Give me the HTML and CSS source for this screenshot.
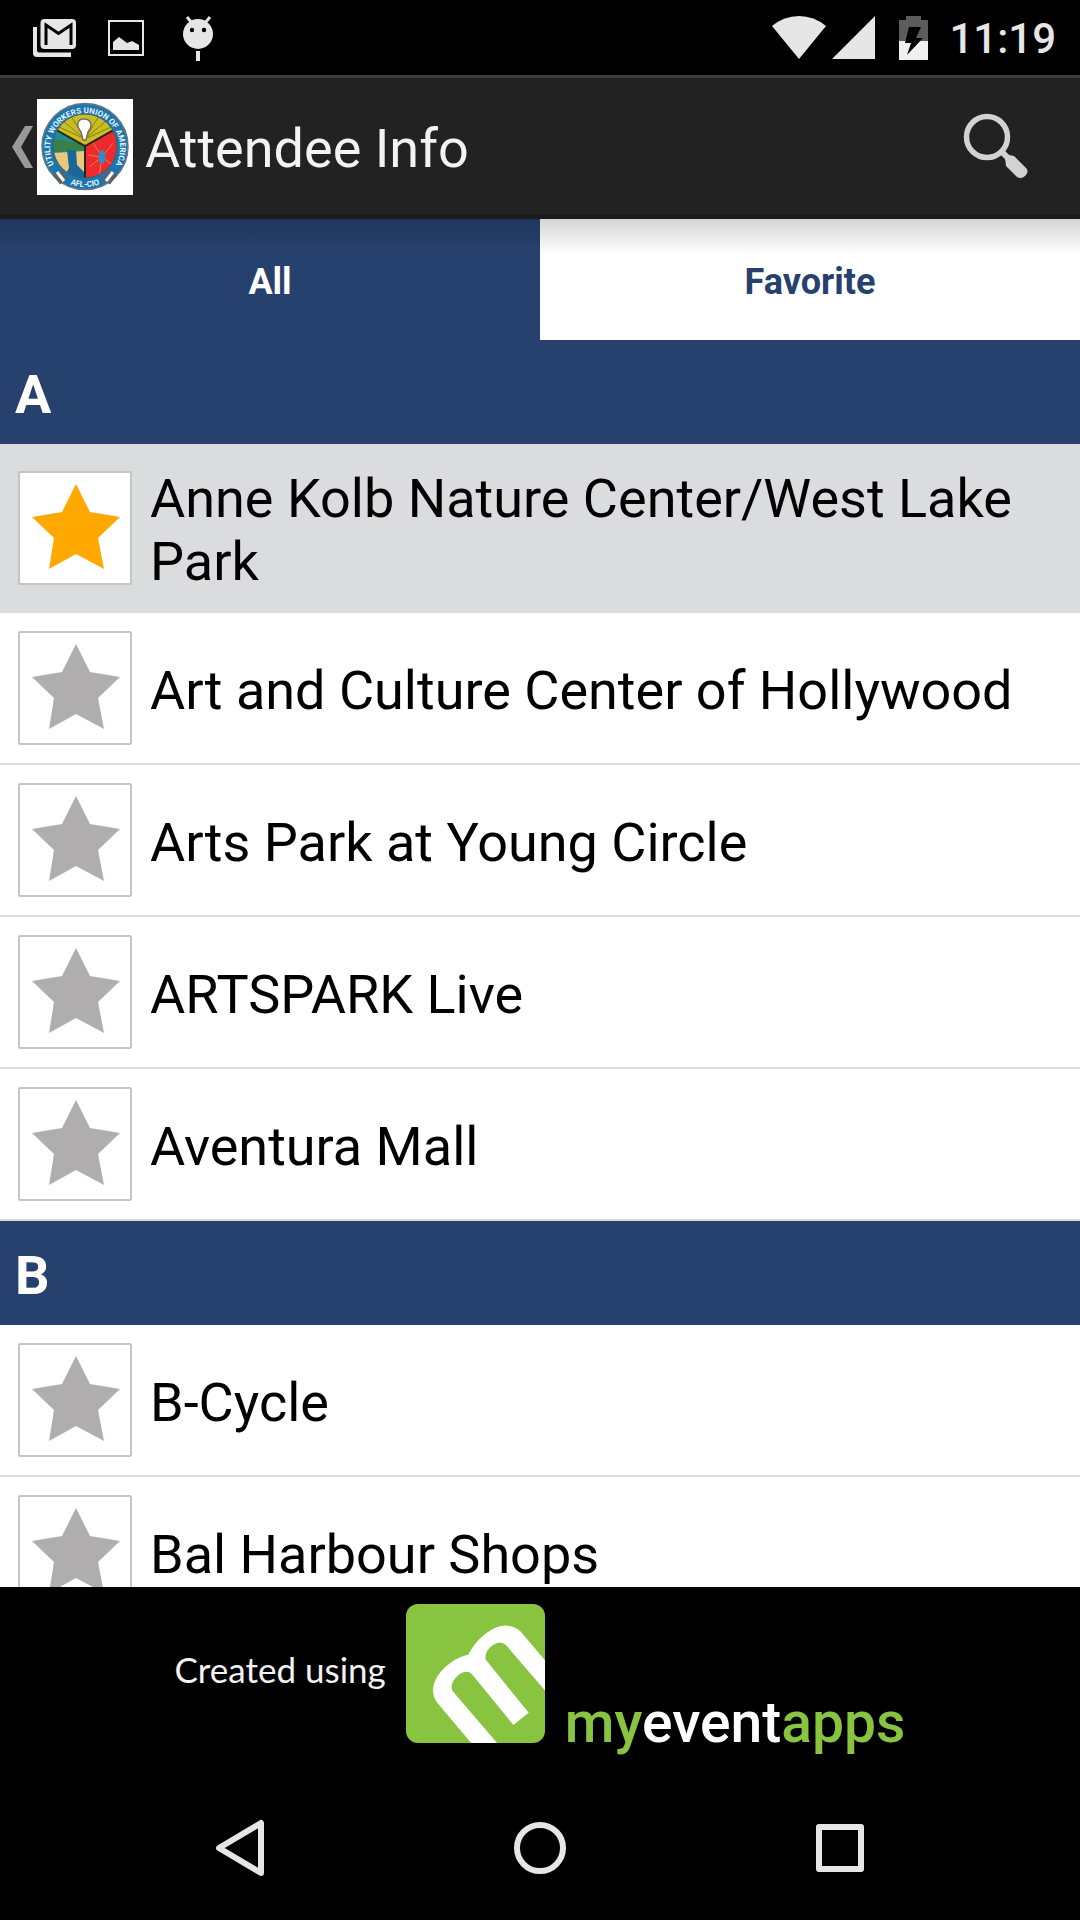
FILE: index.html
```html
<!DOCTYPE html>
<html lang="en">
<head>
<meta charset="utf-8">
<meta name="viewport" content="width=device-width, initial-scale=1">
<title>Attendee Info</title>
<link rel="stylesheet" href="styles.css">
</head>
<body>
<svg class="defs" aria-hidden="true">
  <symbol id="star" viewBox="0 0 114 114">
    <path d="M58 13L72 41L102 46L80 67L86 98L58 83L31 98L36 67L14 46L44 41Z" fill="currentColor"/>
  </symbol>
</svg>

<div class="status">
  <div class="notices">
    <svg width="48" height="48" viewBox="0 0 48 48" fill="#e6e6e6" aria-label="Mail"><path d="M3 13H7V36Q7 38.500 9.500 38.500H41V43H7Q3 43 3 39z"/><rect x="10.500" y="5" width="35.500" height="30" rx="4"/><path d="M16 31V11L28.500 19.500L41 11V31" fill="none" stroke="#000" stroke-width="3"/></svg>
    <svg width="48" height="48" viewBox="0 0 48 48" fill="#e6e6e6" aria-label="Picture"><rect x="7" y="7" width="34" height="34" fill="none" stroke="#e6e6e6" stroke-width="2"/><path d="M11 36V28L17 23L25 29L30 27L37 31V36z"/></svg>
    <svg width="48" height="48" viewBox="0 0 48 48" fill="#e6e6e6" aria-label="Debugging"><path d="M13 3l5 6M36 3l-5 6" stroke="#e6e6e6" stroke-width="3"/><path d="M24 37v10" stroke="#e6e6e6" stroke-width="4"/><circle cx="24" cy="20" r="15"/><circle cx="18" cy="16" r="2.200" fill="#000"/><circle cx="30" cy="16" r="2.200" fill="#000"/></svg>
  </div>
  <div class="system">
    <svg width="54" height="44" viewBox="0 0 54 44" fill="#e6e6e6" aria-label="Wi-Fi"><path d="M0 10Q12 0 27 0T54 10L27 43z"/></svg>
    <svg width="43" height="44" viewBox="0 0 43 44" fill="#e6e6e6" aria-label="Signal"><path d="M43 0V43H0z"/></svg>
    <svg class="battery" width="29" height="44" viewBox="0 0 29 44" aria-label="Charging"><path d="M7 0H22V4H29V25H0V4H7z" fill="#5c5c5c"/><path d="M0 25H29V44H0z" fill="#f0f0f0"/><path d="M10 11H22L17 22H24L8 39L12 27H6z" fill="#000"/></svg>
    <time class="clock">11:19</time>
  </div>
</div>

<header class="bar">
  <a class="up" href="#" aria-label="Back">
    <svg width="22" height="42" viewBox="0 0 22 42"><path d="M13 0H21L9 21L21 42H13L0 21z" fill="#999"/></svg>
    <svg class="seal" width="96" height="96" viewBox="0 0 96 96">
      <defs>
        <clipPath id="disc"><circle cx="48" cy="47" r="32"/></clipPath>
        <path id="ring" d="M18.500 68A35 35 0 1 1 77.500 68"/>
        <path id="foot" d="M20 78Q48 98 76 78"/>
      </defs>
      <rect width="96" height="96" fill="#fff"/>
      <circle cx="48" cy="47.500" r="43" fill="#1b76ae" stroke="#667681" stroke-width="1.500"/>
      <g clip-path="url(#disc)">
        <rect x="14" y="12" width="34" height="70" fill="#e9c979"/>
        <path d="M14 28L48 47V52L14 54z" fill="#1d8f92"/>
        <path d="M14 39L46 45L47 51L14 53z" fill="#377f45"/>
        <path d="M30 51H39L40 66L48 74V84H24L32 69z" fill="#17679b"/>
        <path d="M14 29L48 47L82 29V8H14z" fill="#c9bd24"/>
        <path d="M48 47L82 29V84H48z" fill="#ed2a2c"/>
        <path d="M48 40L22 28M48 40L26 22M48 40L34 17M48 40L62 17M48 40L70 21M48 40L74 28" stroke="#847d16" stroke-width="1"/>
        <path d="M65 58L55 42M65 58L76 44M65 58L52 68M65 58L62 78M65 58L78 68M65 58L51 56" stroke="#f47560" stroke-width="1"/>
        <path d="M16 29L48 47L80 29M48 47V82" fill="none" stroke="#2a2518" stroke-width="2"/>
      </g>
      <circle cx="48" cy="47" r="32" fill="none" stroke="#44586a" stroke-width="1"/>
      <path d="M44 33C38 25 41 20 47 20S57 25 51 33L49 41H46z" fill="#fff" stroke="#77705a" stroke-width="1.500"/>
      <ellipse cx="65" cy="58" rx="3.500" ry="7" fill="#2d8fc0"/>
      <path d="M18 75L25 84M78 75L71 84M22 72L29 81M74 72L67 81" stroke="#5b6166" stroke-width="5"/><path d="M20 73L27 82M76 73L69 82" stroke="#fff" stroke-width="3"/>
      <text class="seal-text"><textPath href="#ring" startOffset="50%" text-anchor="middle">UTILITY WORKERS UNION OF AMERICA</textPath></text>
      <text class="seal-text"><textPath href="#foot" startOffset="50%" text-anchor="middle">AFL-CIO</textPath></text>
    </svg>
  </a>
  <h1 class="title">Attendee Info</h1>
  <button class="search" type="button" aria-label="Search">
    <svg width="66" height="66" viewBox="0 0 66 66"><circle cx="24" cy="24" r="20.500" fill="none" stroke="#d2d2d2" stroke-width="5.500"/><path d="M38 38L46 46" stroke="#d2d2d2" stroke-width="6"/><path d="M42 45Q43 42 46 42L51 43L63 55Q66 58 63 62Q59 67 54 64L43 53z" fill="#d2d2d2"/></svg>
  </button>
</header>

<nav class="tabs">
  <button class="tab tab-on" type="button">All</button>
  <button class="tab" type="button">Favorite</button>
</nav>

<main class="list">
  <h2 class="letter">A</h2>
  <ul class="rows">
    <li class="row row-on"><button class="fav fav-on" type="button" aria-pressed="true" aria-label="Favorite"><svg><use href="#star"/></svg></button><a class="name" href="#">Anne Kolb Nature Center/West Lake Park</a></li>
    <li class="row"><button class="fav" type="button" aria-pressed="false" aria-label="Favorite"><svg><use href="#star"/></svg></button><a class="name" href="#">Art and Culture Center of Hollywood</a></li>
    <li class="row"><button class="fav" type="button" aria-pressed="false" aria-label="Favorite"><svg><use href="#star"/></svg></button><a class="name" href="#">Arts Park at Young Circle</a></li>
    <li class="row"><button class="fav" type="button" aria-pressed="false" aria-label="Favorite"><svg><use href="#star"/></svg></button><a class="name" href="#">ARTSPARK Live</a></li>
    <li class="row"><button class="fav" type="button" aria-pressed="false" aria-label="Favorite"><svg><use href="#star"/></svg></button><a class="name" href="#">Aventura Mall</a></li>
  </ul>
  <h2 class="letter">B</h2>
  <ul class="rows">
    <li class="row"><button class="fav" type="button" aria-pressed="false" aria-label="Favorite"><svg><use href="#star"/></svg></button><a class="name" href="#">B-Cycle</a></li>
    <li class="row"><button class="fav" type="button" aria-pressed="false" aria-label="Favorite"><svg><use href="#star"/></svg></button><a class="name" href="#">Bal Harbour Shops</a></li>
  </ul>
</main>

<footer class="brand">
  <span class="made">Created using</span>
  <svg class="tile" width="139" height="139" viewBox="0 0 418 418" aria-hidden="true">
    <rect width="418" height="418" rx="36" fill="#88c440"/>
    <path d="M196 418L94 297C72 268 80 232 106 202C132 174 160 158 188 152C205 115 255 65 300 65Q328 65 346 84L418 169V260L301 124Q284 108 260 124Q234 145 240 168L369 327L323 364L201 214Q184 194 158 213Q129 240 140 262L274 418z" fill="#fff"/>
  </svg>
  <span class="word">my<span class="word-mid">event</span>apps</span>
</footer>

<nav class="keys">
  <button class="key" type="button" aria-label="Back"><svg width="56" height="60" viewBox="0 0 56 60"><path d="M49 5V55L7 30z"/></svg></button>
  <button class="key" type="button" aria-label="Home"><svg width="56" height="60" viewBox="0 0 56 60"><circle cx="28" cy="30" r="23"/></svg></button>
  <button class="key" type="button" aria-label="Recent apps"><svg width="56" height="60" viewBox="0 0 56 60"><rect x="7" y="9" width="42" height="42"/></svg></button>
</nav>
</body>
</html>
```

FILE: styles.css
```css
* {
  box-sizing: border-box;
}

body {
  margin: 0;
  height: 100vh;
  display: flex;
  flex-direction: column;
  background: #000;
  color: #000;
  font-family: Roboto, "Liberation Sans", sans-serif;
  font-size: 54px;
  line-height: 63px;
}

button {
  margin: 0;
  padding: 0;
  border: 0;
  background: none;
  font: inherit;
  color: inherit;
}

a {
  color: inherit;
  text-decoration: none;
}

svg {
  display: block;
  flex: none;
}

.defs {
  position: absolute;
  width: 0;
  height: 0;
}

/* Status bar */
.status {
  flex: none;
  display: flex;
  justify-content: space-between;
  height: 75px;
  padding: 0 24px 0 30px;
  color: #e6e6e6;
}

.notices {
  display: flex;
  gap: 24px;
  padding-top: 14px;
}

.system {
  display: flex;
  gap: 6px;
  padding-top: 16px;
}

.battery {
  margin: 0 15px 0 18px;
}

.clock {
  font-size: 42px;
  font-weight: 500;
  line-height: 46px;
}

/* Action bar */
.bar {
  flex: none;
  display: flex;
  align-items: center;
  height: 144px;
  padding: 0 51px 0 12px;
  border-top: 3px solid #3c3c3c;
  border-bottom: 5px solid #1b1b1b;
  background: #222;
  color: #f3f3f3;
}

.up {
  display: flex;
  align-items: center;
  gap: 3px;
  padding-top: 2px;
}

.seal-text {
  fill: #e4f3fb;
  font-size: 8px;
  font-weight: 700;
}

.title {
  flex: 1;
  margin: 0;
  padding: 5px 0 0 12px;
  font-size: 54px;
  font-weight: 400;
}

/* Tabs */
.tabs {
  flex: none;
  display: grid;
  grid-template-columns: 1fr 1fr;
  height: 121px;
}

.tab {
  padding-top: 6px;
  background: linear-gradient(rgba(0, 0, 0, 0.16), rgba(0, 0, 0, 0) 36px) #fff;
  color: #27416f;
  font-size: 36px;
  font-weight: 700;
}

.tab-on {
  background-color: #27416f;
  color: #fff;
}

/* List */
.list {
  flex: 1;
  min-height: 0;
  overflow-y: auto;
  scrollbar-width: none;
  background: #fff;
}

.letter {
  margin: 0;
  padding: 23px 15px 18px;
  background: #27416f;
  color: #fff;
  font-size: 54px;
  font-weight: 700;
}

.rows {
  margin: 0;
  padding: 0;
  list-style: none;
}

.row {
  display: flex;
  align-items: center;
  gap: 18px;
  padding: 18px;
  border-bottom: 2px solid #d9dadb;
}

.row-on {
  background: #dbdcdd;
}

.fav {
  flex: none;
  width: 114px;
  height: 114px;
  border: 2px solid #c4c4c5;
  border-radius: 2px;
  background: #fff;
  color: #afadae;
}

.fav svg {
  width: 114px;
  height: 114px;
  margin: -2px;
}

.fav-on {
  color: #ffa800;
}

.name {
  flex: 1;
  padding-top: 5px;
}

/* Sponsor strip */
.brand {
  flex: none;
  display: flex;
  justify-content: center;
  align-items: flex-start;
  gap: 20px;
  height: 189px;
  padding-top: 17px;
  color: #f2f2f2;
}

.made {
  padding-top: 34px;
  font-family: Lato, "Open Sans", sans-serif;
  font-size: 35px;
}

.word {
  padding-top: 87px;
  color: #88c440;
  font-size: 57px;
  font-weight: 500;
}

.word-mid {
  color: #fff;
}

/* System keys */
.keys {
  flex: none;
  display: grid;
  grid-template-columns: repeat(3, 1fr);
  height: 144px;
  padding: 0 90px;
}

.key {
  display: flex;
  align-items: center;
  justify-content: center;
}

.key svg {
  fill: none;
  stroke: #e6e6e6;
  stroke-width: 6px;
  stroke-linejoin: round;
}
```
